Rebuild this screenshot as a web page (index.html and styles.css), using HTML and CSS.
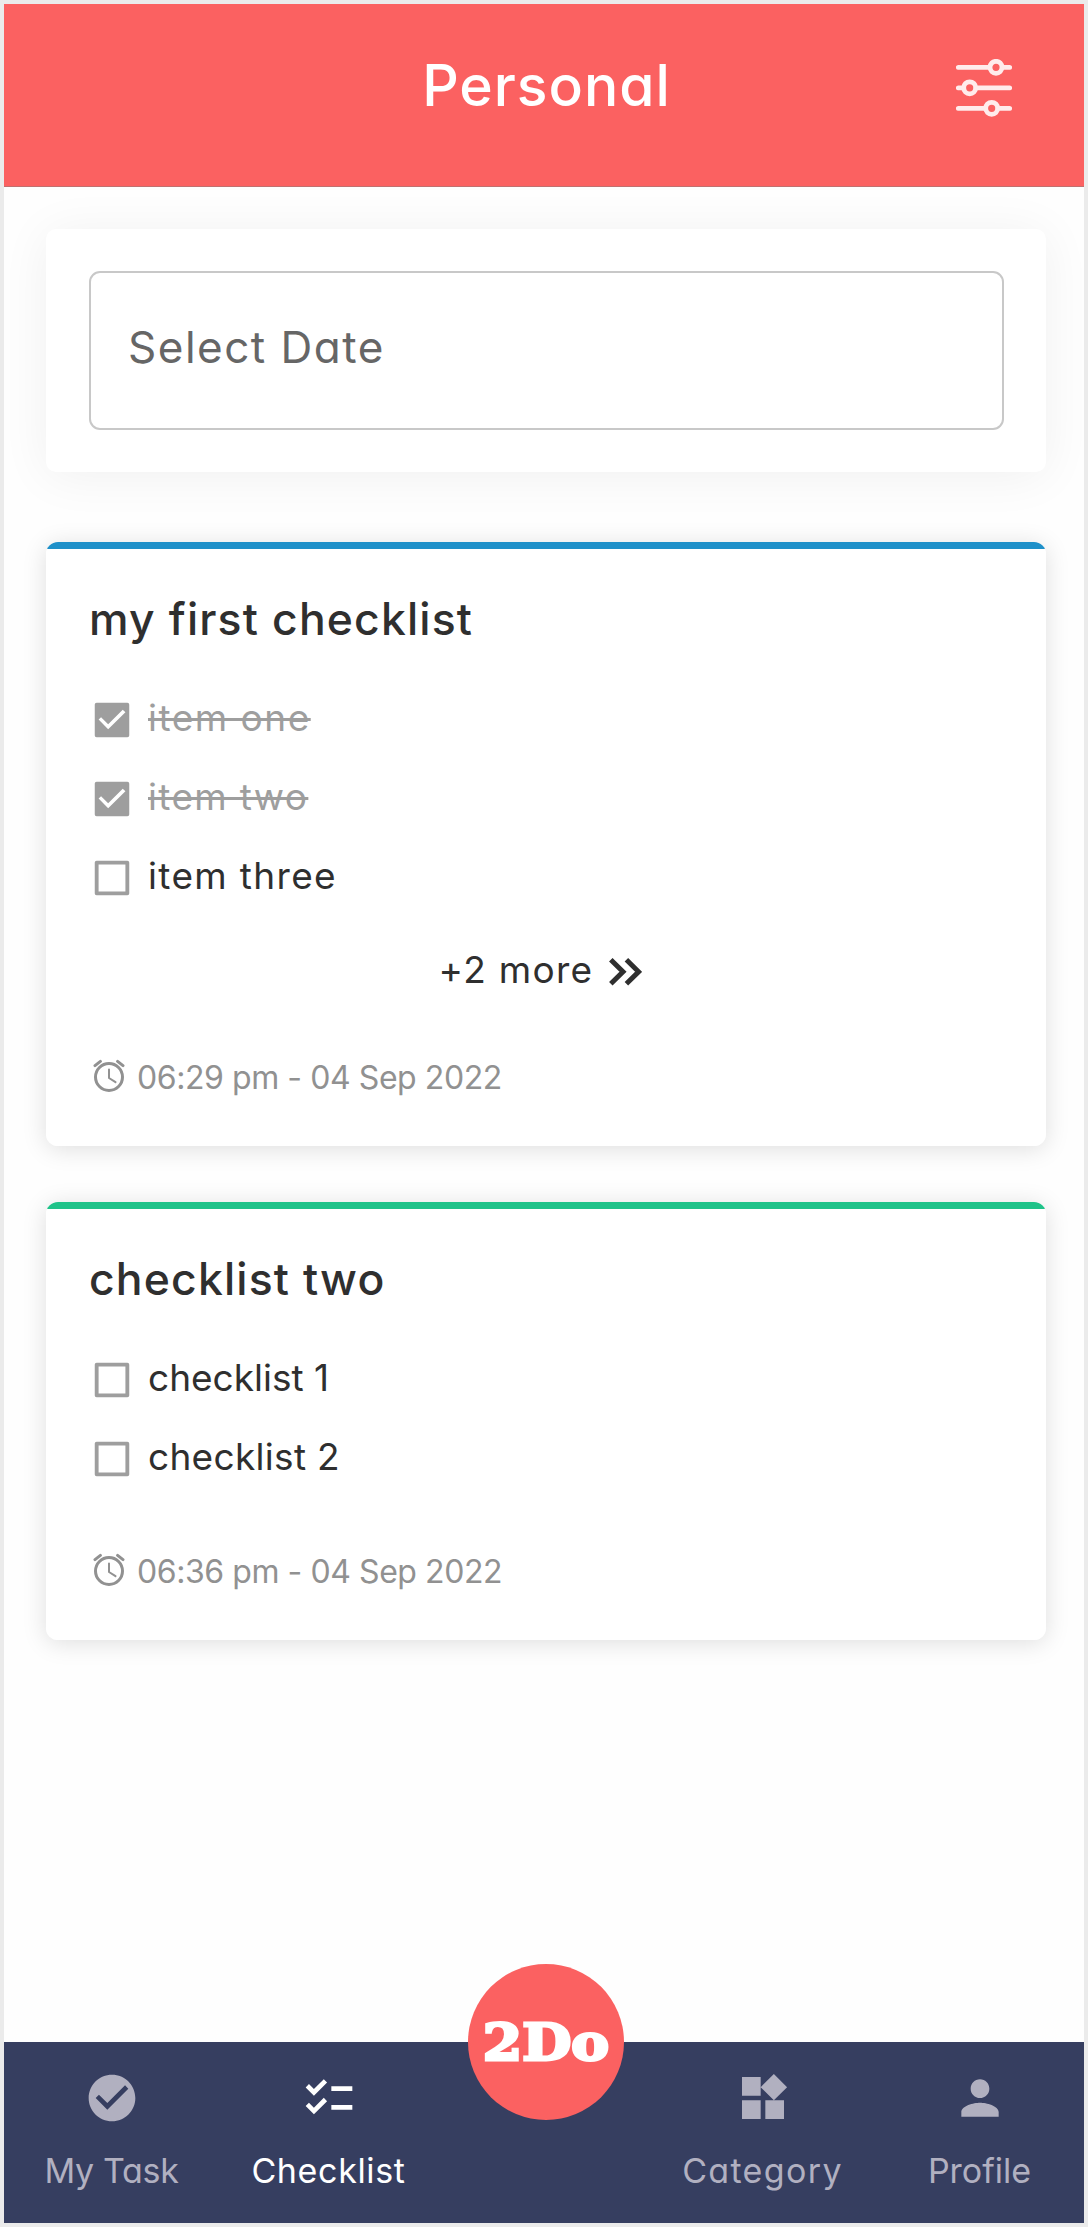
FILE: index.html
```html
<!DOCTYPE html>
<html lang="en">
<head>
<meta charset="utf-8">
<title>Personal</title>
<link rel="stylesheet" href="styles.css">
</head>
<body>
<svg class="sprite" aria-hidden="true">
  <symbol id="box-checked" viewBox="0 0 24 24"><path d="M20 3H4c-.6 0-1 .4-1 1v16c0 .6.4 1 1 1h16c.6 0 1-.4 1-1V4c0-.6-.4-1-1-1zm-10 13.8l-5-5 1.3-1.3 3.7 3.7 7.6-7.6L19 7.9l-9 8.9z"/></symbol>
  <symbol id="box-empty" viewBox="0 0 24 24"><path d="M19 5v14H5V5h14m1-2H4c-.6 0-1 .4-1 1v16c0 .6.4 1 1 1h16c.6 0 1-.4 1-1V4c0-.6-.4-1-1-1z"/></symbol>
  <symbol id="alarm" viewBox="0 0 32 34"><g fill="none" stroke="currentColor" stroke-linecap="round" stroke-linejoin="round"><circle cx="16" cy="18" r="13.5" stroke-width="3"/><path d="M16 10.5V19l6.5 4.2" stroke-width="2"/><path d="M2 6.6L7.4 2.4M30 6.6L24.6 2.4" stroke-width="3"/></g></symbol>
</svg>
<div class="app">
  <header class="header">
    <h1 class="title">Personal</h1>
    <svg class="filter" viewBox="0 0 56 58"><g fill="none" stroke="currentColor" stroke-width="4.8" stroke-linecap="round"><path d="M2.3 8.3H33M47 8.3h6.7M2.3 28.8H7M20 28.8h33.7M2.3 49.3H29M42 49.3h11.7"/><circle cx="40" cy="8.3" r="6"/><circle cx="13.7" cy="28.8" r="6"/><circle cx="35.7" cy="49.3" r="6"/></g></svg>
  </header>
  <main class="content">
    <section class="date-card">
      <div class="date-input">Select Date</div>
    </section>

    <section class="card card-blue">
      <h2 class="card-title">my first checklist</h2>
      <ul class="items">
        <li class="item done track-lg"><svg><use href="#box-checked"/></svg><span>item one</span></li>
        <li class="item done track-md"><svg><use href="#box-checked"/></svg><span>item two</span></li>
        <li class="item track-md"><svg><use href="#box-empty"/></svg><span>item three</span></li>
      </ul>
      <div class="more"><span>+2 more</span><svg viewBox="0 0 33 28"><path d="M1.8 1.8L14 13.8 1.8 25.8M17.4 1.8L29.6 13.8 17.4 25.8" fill="none" stroke="currentColor" stroke-width="5"/></svg></div>
      <div class="time"><svg><use href="#alarm"/></svg><span>06:29 pm - 04 Sep 2022</span></div>
    </section>

    <section class="card card-green">
      <h2 class="card-title">checklist two</h2>
      <ul class="items">
        <li class="item"><svg><use href="#box-empty"/></svg><span>checklist 1</span></li>
        <li class="item track-sm"><svg><use href="#box-empty"/></svg><span>checklist 2</span></li>
      </ul>
      <div class="time"><svg><use href="#alarm"/></svg><span>06:36 pm - 04 Sep 2022</span></div>
    </section>
  </main>
  <nav class="nav">
    <a class="tab track-tight"><svg viewBox="0 0 24 24"><path d="M12 2C6.48 2 2 6.48 2 12s4.48 10 10 10 10-4.48 10-10S17.52 2 12 2zm-2 15l-5-5 1.41-1.41L10 14.17l7.59-7.59L19 8l-9 9z"/></svg><span>My Task</span></a>
    <a class="tab active track-xs"><svg viewBox="0 0 24 24"><path d="M22 7h-9v2h9V7zm0 8h-9v2h9v-2zM5.54 11L2 7.46l1.41-1.41 2.12 2.12 4.24-4.24 1.41 1.41L5.54 11zm0 8L2 15.46l1.41-1.41 2.12 2.12 4.24-4.24 1.41 1.41L5.54 19z"/></svg><span>Checklist</span></a>
    <a class="fab"><span>2Do</span></a>
    <a class="tab track-md"><svg viewBox="0 0 24 24"><path d="M13 13v8h8v-8h-8zM3 21h8v-8H3v8zM3 3v8h8V3H3zm13.66-1.31L11 7.34 16.66 13l5.66-5.66-5.66-5.65z"/></svg><span>Category</span></a>
    <a class="tab"><svg viewBox="0 0 24 24"><path d="M12 12c2.21 0 4-1.79 4-4s-1.79-4-4-4-4 1.79-4 4 1.79 4 4 4zm0 2c-2.67 0-8 1.34-8 4v2h16v-2c0-2.66-5.33-4-8-4z"/></svg><span>Profile</span></a>
  </nav>
</div>
</body>
</html>
```
FILE: styles.css
```css
* { box-sizing: border-box; }

body {
  margin: 0;
  background: #ebebeb;
  color: #2f2f2f;
  font-family: Inter, "Open Sans", sans-serif;
  font-feature-settings: "cv11";
}

h1, h2, ul { margin: 0; padding: 0; }
svg { display: block; flex: none; fill: currentColor; }
.sprite { display: none; }

.app {
  display: flex;
  flex-direction: column;
  width: 1080px;
  height: 2219px;
  margin: 4px;
  overflow: hidden;
  background: #fefefe;
}

.header {
  display: grid;
  grid-template-columns: 1fr auto 1fr;
  align-items: center;
  flex: none;
  height: 183px;
  padding: 0 72px 18px 77px;
  border-bottom: 1px solid #c0706f;
  background: #fb6161;
  color: #fff;
}
.title {
  grid-column: 2;
  font-size: 57px;
  font-weight: 500;
  line-height: 80px;
  letter-spacing: 1px;
}
.filter {
  justify-self: end;
  width: 56px;
  height: 58px;
  margin-top: 4px;
  color: #ffecec;
}

.content {
  flex: 1;
  padding: 42px 38px 0 42px;
}

.date-card {
  height: 243px;
  padding: 42px 42px 0 43px;
  border-radius: 10px;
  background: #fff;
  box-shadow: 0 4px 50px rgba(0, 0, 0, .06);
}
.date-input {
  height: 159px;
  padding: 45px 37px;
  border: 2px solid #c8c8c8;
  border-radius: 11px;
  color: #666;
  font-size: 44px;
  line-height: 58px;
  letter-spacing: 1.5px;
}

.card {
  margin-top: 56px;
  padding: 47px 42px 50px 43px;
  border-radius: 12px;
  background: linear-gradient(var(--accent) 7px, #fff 7px);
  box-shadow: 0 3px 24px rgba(0, 0, 0, .13);
}
.card-blue { --accent: #1e90c9; margin-top: 70px; }
.card-green { --accent: #1fc389; }
.card-title {
  font-size: 44.5px;
  font-weight: 500;
  line-height: 60px;
  letter-spacing: 1.15px;
}

.items { margin-top: 31px; list-style: none; }
.item {
  display: flex;
  align-items: center;
  gap: 13px;
  height: 79px;
  font-size: 37px;
  line-height: 50px;
}
.item svg { width: 46px; height: 46px; color: #9e9e9e; }
.item span { padding-bottom: 4px; }
.done { color: #9e9e9e; }
.done span { text-decoration: line-through; text-decoration-thickness: 3px; }

.more {
  display: flex;
  align-items: center;
  justify-content: center;
  gap: 16px;
  height: 60px;
  margin-top: 22px;
  padding-right: 12px;
  font-size: 37px;
  letter-spacing: 1.3px;
}
.more svg { width: 33px; height: 28px; margin-top: 5px; }

.time {
  display: flex;
  align-items: center;
  gap: 12px;
  height: 40px;
  margin-top: 52px;
  padding-left: 4px;
  color: #919191;
  font-size: 32px;
  letter-spacing: -.43px;
}
.time svg { width: 32px; height: 34px; margin-top: -1px; }
.time span { padding-top: 2px; }
.more + .time { margin-top: 57px; }

.track-tight { letter-spacing: -.3px; }
.track-xs { letter-spacing: .65px; }
.track-sm { letter-spacing: .3px; }
.track-md { letter-spacing: 1.35px; }
.track-lg { letter-spacing: 1.5px; }

.nav {
  display: grid;
  grid-template-columns: repeat(5, 217px);
  flex: none;
  height: 181px;
  margin-left: -1px;
  background: #363e60;
}
.tab {
  display: flex;
  flex-direction: column;
  align-items: center;
  gap: 25px;
  padding-top: 28px;
  color: #b1b0c0;
  font-size: 34px;
  line-height: 40px;
}
.tab svg { width: 56px; height: 56px; }
.active { color: #fff; }

.fab {
  display: flex;
  align-items: center;
  justify-content: center;
  justify-self: center;
  width: 156px;
  height: 156px;
  margin-top: -78px;
  border-radius: 50%;
  background: #fb6161;
  color: #fff;
  font: bold 51px/60px "DejaVu Serif", serif;
  -webkit-text-stroke: 3px #fff;
}
.fab span { transform: scaleX(1.11); }
```
